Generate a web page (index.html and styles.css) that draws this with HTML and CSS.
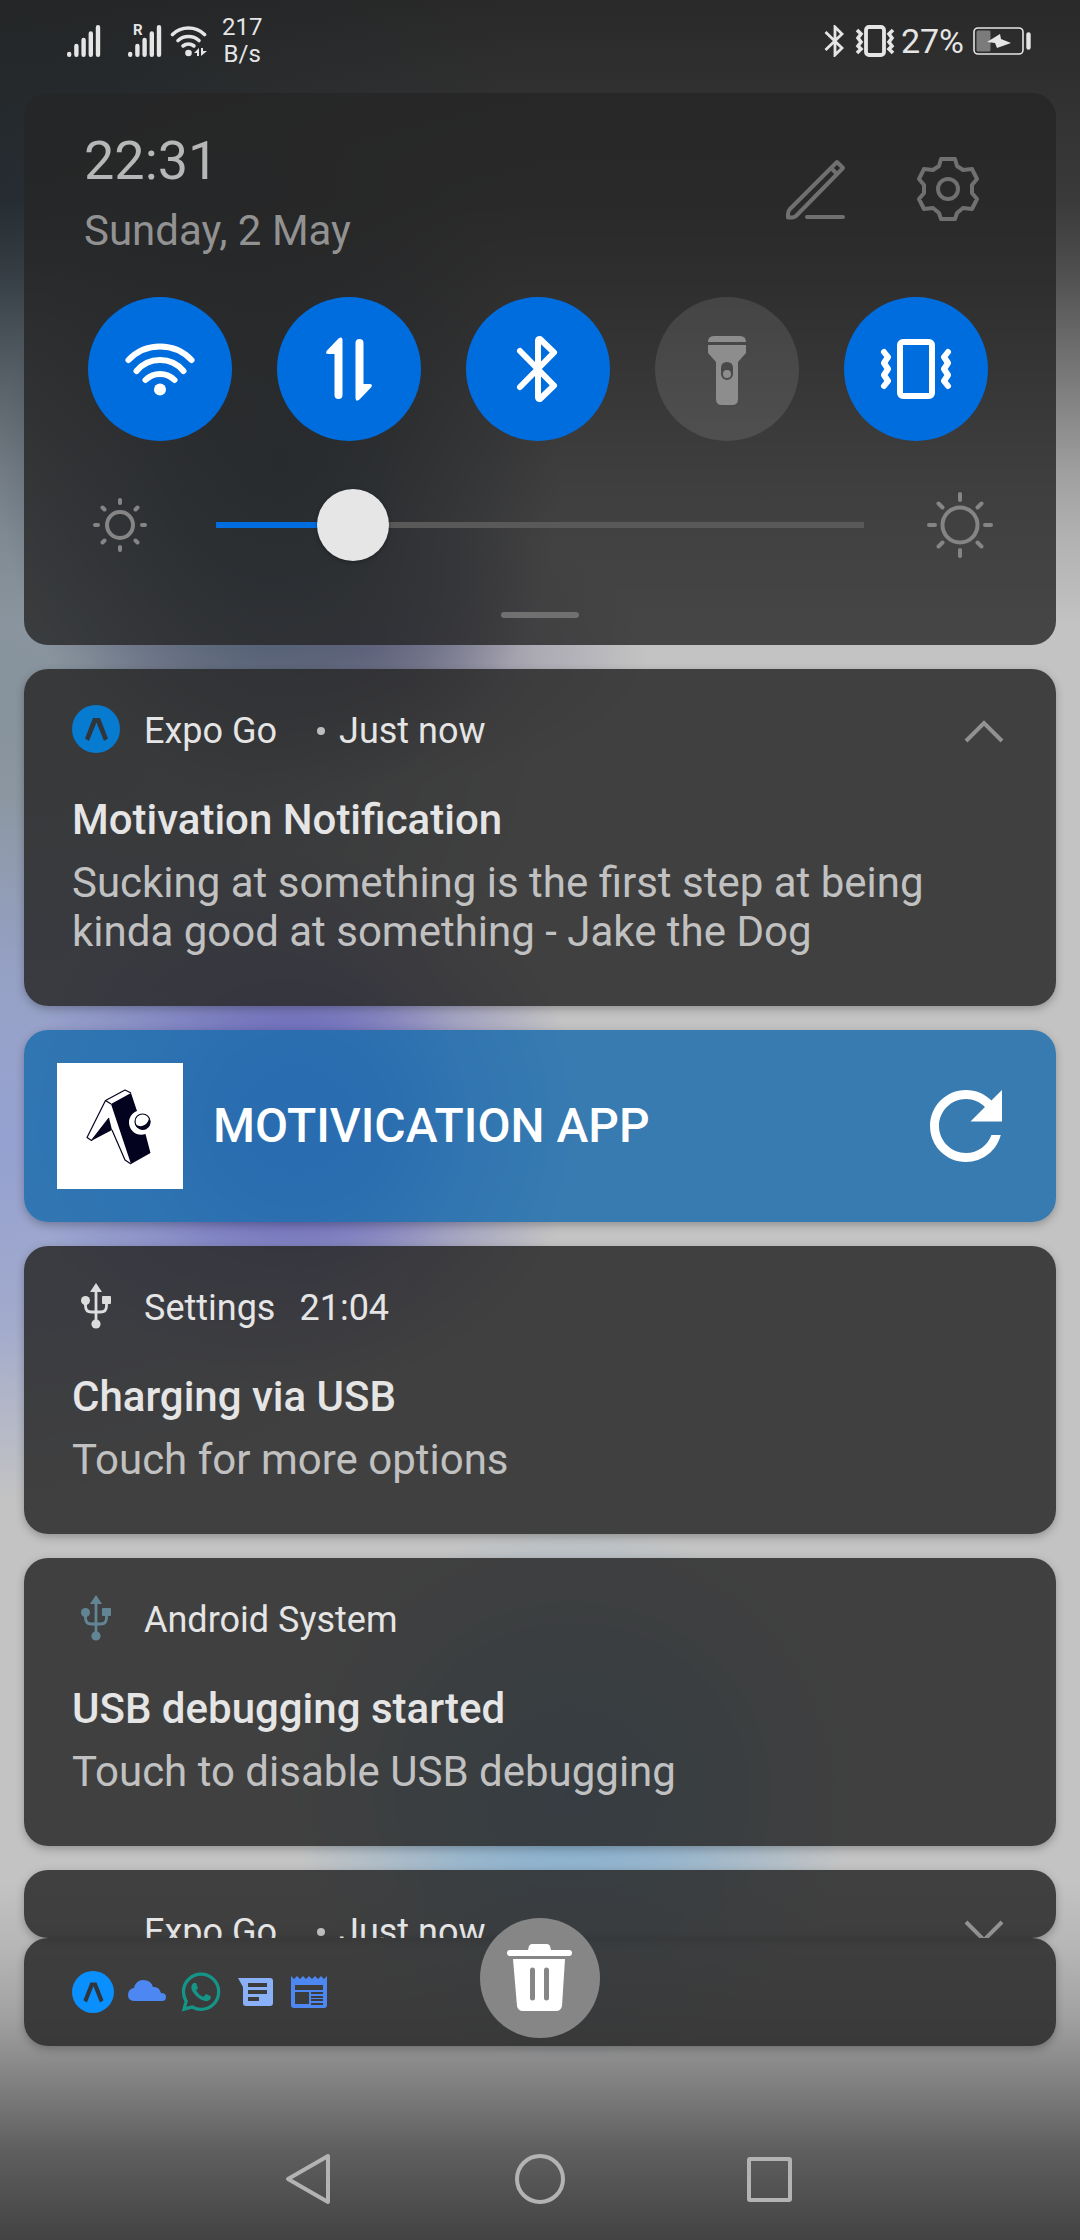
FILE: index.html
```html
<!DOCTYPE html>
<html lang="en">
<head>
<meta charset="utf-8">
<meta name="viewport" content="width=device-width, initial-scale=1">
<title>Notifications</title>
<link rel="stylesheet" href="styles.css">
</head>
<body>
<svg class="defs" aria-hidden="true">
  <symbol id="expo" viewBox="0 0 48 48">
    <circle cx="24" cy="24" r="24" fill="currentColor"/>
    <path d="M21 13h7l8 20.500-4 2.500-7.500-18.500L17 36l-4-2.500z" fill="#30353b"/>
  </symbol>
  <symbol id="usb" viewBox="0 0 48 48">
    <path d="M24 1l6 9H18z" fill="currentColor"/>
    <circle cx="13.500" cy="18.500" r="4.500" fill="currentColor"/>
    <rect x="30" y="14" width="9" height="8" rx="1" fill="currentColor"/>
    <circle cx="24" cy="42" r="4.600" fill="currentColor"/>
    <path d="M24 8v34M13.500 20v4q0 6 6 6h9q6 0 6-6v-4" fill="none" stroke="currentColor" stroke-width="2.800"/>
  </symbol>
  <symbol id="bars" viewBox="0 0 34 32">
    <path d="M2.200 29v.8M9.400 21v8.800M16.600 15v14.800M23.800 8.500v21.300M31 2.200v27.600" fill="none" stroke="currentColor" stroke-width="4.400" stroke-linecap="round"/>
  </symbol>
</svg>
<div class="shade">
  <header class="status">
    <svg class="signal" role="img" aria-label="Signal"><use href="#bars"/></svg>
    <span class="roaming">
      <svg class="signal" role="img" aria-label="Roaming signal"><use href="#bars"/></svg>
      <span class="roaming-mark">R</span>
    </span>
    <svg class="wifi" viewBox="0 0 38 32" role="img" aria-label="Wi-Fi">
      <g fill="none" stroke="currentColor" stroke-width="3.600" stroke-linecap="round">
        <path d="M2.500 9.500a23 23 0 0 1 32 0"/><path d="M8 15.500a16 16 0 0 1 21 0"/><path d="M13 21a9 9 0 0 1 11 0"/>
      </g>
      <circle cx="18.500" cy="28" r="3.300" fill="currentColor"/>
      <path d="M24 28l5-5v8h-2v-3zM31 23v8l6-5h-4v-3z" fill="currentColor"/>
    </svg>
    <span class="speed">217<br>B/s</span>
    <span class="status-right">
      <svg class="bt" viewBox="0 0 20 32" role="img" aria-label="Bluetooth"><path d="M1.500 7L18 23l-7 7V2l7 7L1.500 25" fill="none" stroke="currentColor" stroke-width="2.800"/></svg>
      <svg class="vib" viewBox="0 0 40 32" role="img" aria-label="Vibrate">
        <rect x="11" y="2" width="18" height="28" rx="3" fill="none" stroke="currentColor" stroke-width="3.800"/>
        <path d="M2 5l4 4-3 4 3 4-3 4 3 3-4 4M38 5l-4 4 3 4-3 4 3 4-3 3 4 4" fill="none" stroke="currentColor" stroke-width="3.600"/>
      </svg>
      <span class="percent">27%</span>
      <svg class="battery" viewBox="0 0 58 28" role="img" aria-label="Charging">
        <rect x="1" y="1" width="49" height="26" rx="4" fill="none" stroke="currentColor" stroke-width="1.600"/>
        <rect x="3.500" y="3.500" width="14" height="21" rx="1.500" fill="#7b7b7b"/>
        <path d="M14 15l13-8 1 5 10 4-14 5-2-5z" fill="currentColor"/>
        <path d="M55.500 7.500v13" stroke="currentColor" stroke-width="4.400" stroke-linecap="round"/>
      </svg>
    </span>
  </header>

  <section class="panel" aria-label="Quick settings">
    <div class="panel-head">
      <div>
        <div class="clock">22:31</div>
        <div class="date">Sunday, 2 May</div>
      </div>
      <div class="tools">
        <button class="tool" aria-label="Edit">
          <svg viewBox="0 0 72 72" fill="none" stroke="currentColor" stroke-width="4" stroke-linecap="round" stroke-linejoin="round"><path d="M57 9l6 6-47 48q-2 1.500-4 1.500H8V61q0-3 2-5zM51 15l6 6M27 64h36"/></svg>
        </button>
        <button class="tool" aria-label="Settings">
          <svg viewBox="0 0 72 72" fill="none" stroke="currentColor" stroke-width="4" stroke-linejoin="round"><path d="M29 6h14l2 7 6 4 9-1 5 10-5 6v8l5 6-5 10-9-1-6 5-2 6H29l-2-6-6-5-9 1-5-10 5-6v-8l-5-6 5-10 9 1 6-4z"/><circle cx="36" cy="36" r="10"/></svg>
        </button>
      </div>
    </div>
    <div class="toggles">
      <button class="toggle on" aria-label="Wi-Fi">
        <svg viewBox="0 0 72 72"><g fill="none" stroke="currentColor" stroke-width="6" stroke-linecap="round"><path d="M4.500 27a43.500 43.500 0 0 1 63 0"/><path d="M12.500 38a30.600 30.600 0 0 1 47 0"/><path d="M21.500 47a20.500 20.500 0 0 1 29 0"/></g><circle cx="36" cy="56.500" r="6" fill="currentColor"/></svg>
      </button>
      <button class="toggle on" aria-label="Mobile data">
        <svg viewBox="0 0 72 72" fill="currentColor"><path id="arrow" d="M14 17.500L25.500 5.500q4-3 4 2V62a4 4 0 0 1-8 0V21h-6q-4 0-1.500-3.500z"/><use href="#arrow" transform="rotate(180 36 36)"/></svg>
      </button>
      <button class="toggle on" aria-label="Bluetooth">
        <svg viewBox="0 0 72 72"><path d="M18 18l34 34.500L38 66q-2 0-2-2V8q0-2 2-2l14 13.500L18 54" fill="none" stroke="currentColor" stroke-width="6" stroke-linecap="round" stroke-linejoin="round"/></svg>
      </button>
      <button class="toggle" aria-label="Flashlight">
        <svg viewBox="0 0 72 72"><path fill="currentColor" fill-rule="evenodd" d="M17 9q0-6 6-6h26q6 0 6 6zM17 12h38v8l-8 9v37q0 6-6 6H31q-6 0-6-6V29l-8-9zM36 29q-6 0-6 6v6a6 6 0 0 0 12 0v-6q0-6-6-6z"/><circle cx="36" cy="41" r="4" fill="currentColor"/></svg>
      </button>
      <button class="toggle on" aria-label="Vibrate">
        <svg viewBox="0 0 72 72" fill="none" stroke="currentColor" stroke-width="6" stroke-linecap="round" stroke-linejoin="round"><rect x="20" y="9" width="32" height="54" rx="3"/><path d="M4 19l4 5-4 6 4 6-4 6 4 6-4 5M68 19l-4 5 4 6-4 6 4 6-4 6 4 5"/></svg>
      </button>
    </div>
    <div class="brightness">
      <svg class="sun" viewBox="0 0 72 72" fill="none" stroke="currentColor" stroke-width="4" stroke-linecap="round"><circle cx="36" cy="36" r="13"/><path d="M36 11v3M36 58v3M11 36h3M58 36h3M18.500 18.500l2 2M51.500 51.500l2 2M53.500 18.500l-2 2M20.500 51.500l-2 2"/></svg>
      <input class="slider" type="range" min="0" max="648" value="137" aria-label="Brightness">
      <svg class="sun" viewBox="0 0 72 72" fill="none" stroke="currentColor" stroke-width="4" stroke-linecap="round"><circle cx="36" cy="36" r="17.500"/><path d="M36 5v6M36 61v6M5 36h6M61 36h6M14.500 14.500l4 4M53.500 53.500l4 4M57.500 14.500l-4 4M18.500 53.500l-4 4"/></svg>
    </div>
    <div class="grip"></div>
  </section>

  <main class="list">
    <article class="card">
      <div class="card-head">
        <svg class="app-icon expo" aria-hidden="true"><use href="#expo"/></svg>
        <span>Expo Go</span><span class="when dotted">Just now</span>
        <button class="chevron" aria-label="Collapse"><svg viewBox="0 0 42 26"><path d="M3 23L21 5l18 18" fill="none" stroke="currentColor" stroke-width="4"/></svg></button>
      </div>
      <h2 class="title">Motivation Notification</h2>
      <p class="text">Sucking at something is the first step at being kinda good at something - Jake the Dog</p>
    </article>

    <article class="card promo">
      <svg class="logo" viewBox="0 0 126 126" role="img" aria-label="Motivication logo">
        <path d="M54 41l20-11 6 18a12 12 0 0 0 8.500 23l5 19L74 101z" fill="#03031f"/>
        <path d="M52 55l3 12-21 11z" fill="#03031f"/>
        <g fill="none" stroke="#03031f" stroke-width="1.200" stroke-linejoin="round"><path d="M54 41l-5.500-3.500L68 27l6 3M48.500 37.500L30 74.500l4.500 3L52 55M55 67l13 30 6 4"/><circle cx="85.500" cy="58.500" r="7.500"/></g>
        <path d="M92 55a7.600 7.600 0 1 1-13.500 6.500q5 3 9 .5 4-2.500 4.500-7z" fill="#03031f"/>
      </svg>
      <h2 class="promo-title">MOTIVICATION APP</h2>
      <button class="refresh" aria-label="Refresh"><svg viewBox="0 0 24 24"><path fill="currentColor" d="M17.650 6.350C16.200 4.900 14.210 4 12 4c-4.420 0-7.990 3.580-7.990 8s3.570 8 7.990 8c3.730 0 6.840-2.550 7.730-6h-2.080c-.82 2.330-3.040 4-5.650 4-3.310 0-6-2.690-6-6s2.690-6 6-6c1.660 0 3.140.69 4.220 1.780L13 11h7V4l-2.350 2.350z"/></svg></button>
    </article>

    <article class="card">
      <div class="card-head">
        <svg class="app-icon" aria-hidden="true"><use href="#usb"/></svg>
        <span>Settings</span><span class="when">21:04</span>
      </div>
      <h2 class="title">Charging via USB</h2>
      <p class="text">Touch for more options</p>
    </article>

    <article class="card">
      <div class="card-head">
        <svg class="app-icon system" aria-hidden="true"><use href="#usb"/></svg>
        <span>Android System</span>
      </div>
      <h2 class="title">USB debugging started</h2>
      <p class="text">Touch to disable USB debugging</p>
    </article>

    <article class="card peek">
      <div class="card-head">
        <span class="app-icon"></span>
        <span>Expo Go</span><span class="when dotted">Just now</span>
        <button class="chevron" aria-label="Expand"><svg viewBox="0 0 42 26"><path d="M3 3l18 18L39 3" fill="none" stroke="currentColor" stroke-width="4"/></svg></button>
      </div>
    </article>
  </main>

  <div class="card tray">
    <svg class="tray-icon expo-bright" role="img" aria-label="Expo Go"><use href="#expo"/></svg>
    <svg class="tray-icon" viewBox="0 0 42 42" role="img" aria-label="Cloud"><path d="M9 30q-7 0-7-6t6-7q2-8 9-8 8 0 10 7 6-1 8 6 5 0 5 4t-4 4z" fill="#4d87f2"/></svg>
    <svg class="tray-icon" viewBox="-1 -1 26 26" role="img" aria-label="WhatsApp"><path fill="#159588" d="M17.472 14.382c-.297-.149-1.758-.867-2.030-.967-.273-.099-.471-.148-.67.15-.197.297-.767.966-.94 1.164-.173.199-.347.223-.644.075-.297-.15-1.255-.463-2.390-1.475-.883-.788-1.480-1.761-1.653-2.059-.173-.297-.018-.458.13-.606.134-.133.298-.347.446-.52.149-.174.198-.298.298-.497.099-.198.05-.371-.025-.52-.075-.149-.669-1.612-.916-2.207-.242-.579-.487-.5-.669-.51-.173-.008-.371-.01-.57-.01-.198 0-.52.074-.792.372-.272.297-1.040 1.016-1.040 2.479 0 1.462 1.065 2.875 1.213 3.074.149.198 2.096 3.200 5.077 4.487.709.306 1.262.489 1.694.625.712.227 1.360.195 1.871.118.571-.085 1.758-.719 2.006-1.413.248-.694.248-1.289.173-1.413-.074-.124-.272-.198-.57-.347m-5.421 7.403h-.004a9.870 9.870 0 0 1-5.031-1.378l-.361-.214-3.741.982.998-3.648-.235-.374a9.860 9.860 0 0 1-1.510-5.260c.001-5.450 4.436-9.884 9.888-9.884 2.640 0 5.122 1.030 6.988 2.898a9.825 9.825 0 0 1 2.893 6.994c-.003 5.450-4.437 9.884-9.885 9.884m8.413-18.297A11.815 11.815 0 0 0 12.050 0C5.495 0 .16 5.335.157 11.892c0 2.096.547 4.142 1.588 5.945L.057 24l6.305-1.654a11.882 11.882 0 0 0 5.683 1.448h.005c6.554 0 11.890-5.335 11.893-11.893a11.821 11.821 0 0 0-3.480-8.413Z"/></svg>
    <svg class="tray-icon" viewBox="0 0 42 42" role="img" aria-label="Messages"><path fill="#8ab0f8" fill-rule="evenodd" d="M4 7h32q3 0 3 3v22q0 3-3 3H12q-3 0-3-3V16zM14 12v4h19v-4zM14 19v4h19v-4zM14 26v4h11v-4z"/></svg>
    <svg class="tray-icon" viewBox="0 0 42 42" role="img" aria-label="News"><path fill="#4d87f2" fill-rule="evenodd" d="M3 5l3 3 3-3 3 3 3-3 3 3 3-3 3 3 3-3 3 3 3-3 3 3 3-3v29q0 3-3 3H6q-3 0-3-3zM7 14v5h28v-5zM7 21v12h14V21zM23 21v2h12v-2zM23 25v2h12v-2zM23 28v2h12v-2zM23 32v2h12v-2z"/></svg>
    <button class="clear" aria-label="Clear all">
      <svg viewBox="0 0 120 120"><path fill="currentColor" fill-rule="evenodd" d="M48 32l1-4q1-2 3-2h15q2 0 3 2l1 4h18a3 3 0 0 1 0 6H30a3 3 0 0 1 0-6zM33 41h52l-3 47q-1 5-6 5H43q-5 0-6-5zM50 52v28a2.500 2.500 0 0 0 5 0V52a2.500 2.500 0 0 0-5 0zM64 52v28a2.500 2.500 0 0 0 5 0V52a2.500 2.500 0 0 0-5 0z"/></svg>
    </button>
  </div>

  <nav class="nav" aria-label="System">
    <button class="nav-key" aria-label="Back"><svg viewBox="0 0 54 54"><path d="M5 27L45 4v46z" fill="none" stroke="currentColor" stroke-width="4" stroke-linejoin="round"/></svg></button>
    <button class="nav-key" aria-label="Home"><svg viewBox="0 0 54 54"><circle cx="27" cy="27" r="23" fill="none" stroke="currentColor" stroke-width="4"/></svg></button>
    <button class="nav-key" aria-label="Recents"><svg viewBox="0 0 54 54"><rect x="6" y="7" width="41" height="41" rx="1" fill="none" stroke="currentColor" stroke-width="4"/></svg></button>
  </nav>
</div>
</body>
</html>
```
FILE: styles.css
```css
* { box-sizing: border-box; }

body {
  margin: 0;
  font-family: Roboto, "Liberation Sans", sans-serif;
  color: #e5e5e5;
  background: #c3c3c3;
}

h2, p { margin: 0; }

button {
  padding: 0;
  border: 0;
  background: none;
  color: inherit;
  font: inherit;
}

svg { display: block; }

.defs { position: absolute; width: 0; height: 0; }

/* Blurred wallpaper, dimmed towards the top and bottom edges */
.shade {
  display: flex;
  flex-direction: column;
  min-height: 100vh;
  background:
    linear-gradient(rgba(28, 28, 28, .92) 0, rgba(28, 28, 28, .88) 4%, rgba(28, 28, 28, .82) 9%, rgba(28, 28, 28, .7) 12%, rgba(28, 28, 28, .54) 15%, rgba(28, 28, 28, .38) 18%, rgba(28, 28, 28, .22) 21%, rgba(28, 28, 28, .1) 24%, rgba(28, 28, 28, 0) 28%, rgba(28, 28, 28, 0) 84%, rgba(28, 28, 28, .08) 87%, rgba(28, 28, 28, .2) 90%, rgba(28, 28, 28, .4) 93%, rgba(28, 28, 28, .6) 96%, rgba(28, 28, 28, .77) 100%),
    radial-gradient(26% 12% at 28% 50%, rgba(98, 96, 186, 1) 0, rgba(98, 96, 186, .85) 30%, rgba(98, 96, 186, .35) 65%, rgba(98, 96, 186, 0) 100%),
    radial-gradient(26% 15% at 26% 21%, rgba(60, 78, 96, 1) 0, rgba(60, 78, 96, .8) 35%, rgba(66, 76, 102, .35) 75%, rgba(66, 76, 102, 0) 100%),
    radial-gradient(26% 6% at 34% 29%, rgba(98, 88, 128, .6) 0, rgba(98, 88, 128, 0) 100%),
    radial-gradient(26% 12% at 53% 80%, rgba(130, 174, 208, 1) 0, rgba(130, 174, 208, .65) 45%, rgba(130, 174, 208, 0) 100%),
    radial-gradient(45% 16% at 0 51%, rgba(148, 160, 208, 1) 0, rgba(148, 160, 208, .7) 50%, rgba(148, 160, 208, 0) 100%),
    radial-gradient(50% 22% at 0 31%, rgba(134, 146, 156, 1) 0, rgba(134, 146, 156, .8) 50%, rgba(134, 146, 156, 0) 100%),
    radial-gradient(50% 20% at 0 8%, rgba(80, 120, 150, 1) 0, rgba(80, 120, 150, 0) 100%),
    #c3c3c3;
}

/* Status bar */
.status {
  display: flex;
  align-items: center;
  height: 93px;
  padding: 0 49px 12px 67px;
}

.signal { width: 34px; height: 32px; }
.roaming { position: relative; margin: 0 8px 0 27px; }
.roaming-mark {
  position: absolute;
  left: 5px;
  top: -2px;
  font-size: 15px;
  line-height: 15px;
  font-weight: 700;
}
.wifi { width: 38px; height: 32px; }
.speed {
  margin-left: 14px;
  font-size: 24px;
  line-height: 27px;
  text-align: center;
}
.status-right {
  display: flex;
  align-items: center;
  margin-left: auto;
}
.bt { width: 20px; height: 32px; }
.vib { width: 40px; height: 32px; margin: 0 6px 0 11px; }
.percent { font-size: 34px; line-height: 40px; }
.battery { width: 58px; height: 28px; margin-left: 9px; }

/* Quick settings */
.panel {
  margin: 0 24px;
  padding: 36px 0 27px;
  border-radius: 24px;
  background: rgba(37, 37, 37, .8);
}
.panel-head {
  display: flex;
  justify-content: space-between;
  padding: 0 72px 0 60px;
}
.clock {
  margin-bottom: 13px;
  font-size: 54px;
  line-height: 64px;
  color: #b7b7b7;
}
.date {
  font-size: 42px;
  line-height: 49px;
  color: #929292;
}
.tools {
  display: flex;
  gap: 60px;
  padding-top: 24px;
  color: #707070;
}
.tool, .tool svg { width: 72px; height: 72px; }
.toggles {
  display: flex;
  justify-content: space-between;
  margin-top: 42px;
  padding: 0 68px 0 64px;
}
.toggle {
  display: grid;
  place-items: center;
  width: 144px;
  height: 144px;
  border-radius: 50%;
  background: rgba(255, 255, 255, .1);
  color: #8d8d8d;
}
.toggle.on { background: #006ddf; color: #fff; }
.toggle svg { width: 72px; height: 72px; }

.brightness {
  display: flex;
  gap: 24px;
  margin-top: 48px;
  padding: 0 60px;
  color: #858585;
}
.sun { flex: none; width: 72px; height: 72px; }
.slider {
  flex: 1;
  min-width: 0;
  height: 72px;
  margin: 0;
  appearance: none;
  background:
    linear-gradient(#006ddf, #006ddf) 36px 50% / 137px 6px no-repeat,
    linear-gradient(#595959, #595959) 50% 50% / calc(100% - 72px) 6px no-repeat;
}
.slider::-webkit-slider-thumb {
  appearance: none;
  width: 72px;
  height: 72px;
  border-radius: 50%;
  background: #e6e6e6;
  box-shadow: 0 1px 4px rgba(0, 0, 0, .35);
}
.grip {
  width: 78px;
  height: 6px;
  margin: 51px auto 0;
  border-radius: 3px;
  background: #707070;
}

/* Notifications */
.list {
  display: flex;
  flex-direction: column;
  gap: 24px;
  padding: 24px 24px 0;
}
.card {
  padding: 36px 48px 50px;
  border-radius: 24px;
  background: rgba(42, 42, 42, .86);
  box-shadow: 0 3px 9px rgba(0, 0, 0, .25);
}
.card-head {
  display: flex;
  align-items: flex-start;
  height: 52px;
  font-size: 36px;
  line-height: 52px;
}
.app-icon {
  width: 48px;
  height: 48px;
  margin-right: 24px;
  color: #dcdcdc;
}
.app-icon.expo { color: #067bd0; }
.app-icon.system { color: #628595; }
.when { margin-left: 24px; }
.dotted {
  display: flex;
  align-items: center;
  gap: 14px;
  margin-left: 40px;
}
.dotted::before {
  content: "";
  width: 8px;
  height: 8px;
  border-radius: 50%;
  background: #bdbdbd;
}
.chevron {
  align-self: center;
  margin: 0 3px 0 auto;
  color: #929292;
}
.chevron svg { width: 42px; height: 26px; }
.title {
  margin: 38px 0 14px;
  font-size: 42px;
  line-height: 49px;
  font-weight: 500;
}
.text {
  font-size: 42px;
  line-height: 49px;
  color: #c1c1c1;
}

.promo {
  display: flex;
  align-items: center;
  padding: 33px 36px 33px 33px;
  background: rgba(30, 110, 174, .85);
}
.logo { width: 126px; height: 126px; background: #fff; }
.promo-title {
  margin-left: 30px;
  font-size: 48px;
  line-height: 56px;
  font-weight: 500;
  color: #fff;
}
.refresh { margin-left: auto; color: #fff; }
.refresh svg { width: 108px; height: 108px; }

.peek {
  height: 68px;
  padding-bottom: 0;
  overflow: hidden;
}

.tray {
  position: relative;
  display: flex;
  align-items: center;
  gap: 12px;
  height: 108px;
  margin: 0 24px;
  padding: 0 48px;
}
.tray-icon { width: 42px; height: 42px; }
.expo-bright { color: #0a8fff; }
.clear {
  position: absolute;
  left: calc(50% - 60px);
  top: -20px;
  width: 120px;
  height: 120px;
  border-radius: 50%;
  background: #868686;
  color: #fff;
}

/* Navigation keys */
.nav {
  display: flex;
  justify-content: center;
  align-items: center;
  gap: 176px;
  height: 122px;
  margin-top: auto;
  color: #b3b3b3;
}
.nav-key, .nav-key svg { width: 54px; height: 54px; }
```
